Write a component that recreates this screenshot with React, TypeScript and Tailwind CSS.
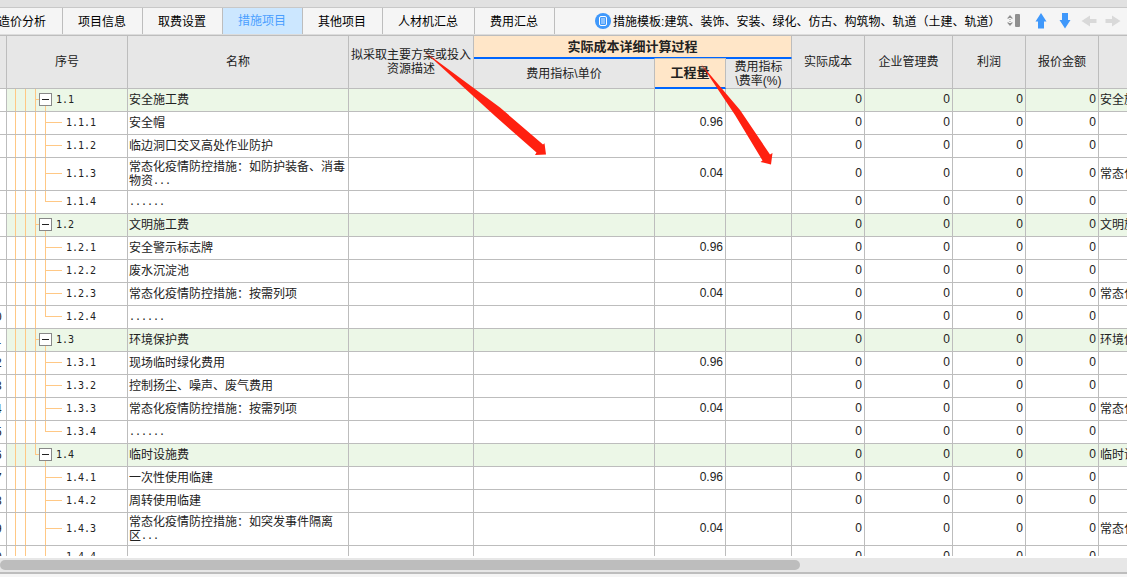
import { useState } from "react";
import clsx from "clsx";

type Row = {
  code: string;
  name: string;
  qty?: string;
  note?: string;
  group?: boolean;
  lastGroup?: boolean;
  lastChild?: boolean;
  underLast?: boolean;
  tall?: boolean;
};

const tabs = ["造价分析", "项目信息", "取费设置", "措施项目", "其他项目", "人材机汇总", "费用汇总"];

const rows: Row[] = [
  { code: "1.1", name: "安全施工费", note: "安全施工费", group: true },
  { code: "1.1.1", name: "安全帽", qty: "0.96" },
  { code: "1.1.2", name: "临边洞口交叉高处作业防护" },
  { code: "1.1.3", name: "常态化疫情防控措施：如防护装备、消毒\n物资...", qty: "0.04", note: "常态化疫情防控", tall: true },
  { code: "1.1.4", name: "......", lastChild: true },
  { code: "1.2", name: "文明施工费", note: "文明施工费", group: true },
  { code: "1.2.1", name: "安全警示标志牌", qty: "0.96" },
  { code: "1.2.2", name: "废水沉淀池" },
  { code: "1.2.3", name: "常态化疫情防控措施：按需列项", qty: "0.04", note: "常态化疫情防控" },
  { code: "1.2.4", name: "......", lastChild: true },
  { code: "1.3", name: "环境保护费", note: "环境保护费", group: true },
  { code: "1.3.1", name: "现场临时绿化费用", qty: "0.96" },
  { code: "1.3.2", name: "控制扬尘、噪声、废气费用" },
  { code: "1.3.3", name: "常态化疫情防控措施：按需列项", qty: "0.04", note: "常态化疫情防控" },
  { code: "1.3.4", name: "......", lastChild: true },
  { code: "1.4", name: "临时设施费", note: "临时设施费", group: true, lastGroup: true },
  { code: "1.4.1", name: "一次性使用临建", qty: "0.96", underLast: true },
  { code: "1.4.2", name: "周转使用临建", underLast: true },
  { code: "1.4.3", name: "常态化疫情防控措施：如突发事件隔离\n区...", qty: "0.04", note: "常态化疫情防控", tall: true, underLast: true },
  { code: "1.4.4", name: "......", lastChild: true, underLast: true },
];

const th = "border-r border-b border-[#bdbdbd] p-0 font-normal";
const td = "border-r border-b border-[#bdbdbd] p-0";

// vertical line with a branch to the right at half height
function Elbow({ last, className }: { last?: boolean; className: string }) {
  return (
    <div className={clsx("shrink-0", className)}>
      <div className="h-1/2 border-b border-l border-[#ffc885]" />
      <div className={clsx("h-1/2", !last && "border-l border-[#ffc885]")} />
    </div>
  );
}

function TreeCell({ row }: { row: Row }) {
  return (
    <div className={clsx("flex pl-2", row.tall ? "h-8" : "h-[22px]")}>
      <div className="w-[10px] border-l border-[#ffc885]" />
      <div className="w-[10px] border-l border-[#ffc885]" />
      {row.group ? (
        <>
          <Elbow last={row.lastGroup} className="w-1" />
          <div className="flex w-[13px] flex-col items-center pt-1">
            <button
              aria-label={`收起 ${row.code}`}
              className="flex size-[13px] shrink-0 items-center justify-center border border-[#888] bg-white"
            >
              <span className="h-px w-[7px] bg-[#222]" />
            </button>
            <div className="w-px flex-1 bg-[#ffc885]" />
          </div>
        </>
      ) : (
        <>
          <div className={clsx("w-[10px]", !row.underLast && "border-l border-[#ffc885]")} />
          <Elbow last={row.lastChild} className="w-[17px]" />
        </>
      )}
      <span className="ml-1 self-center pb-px font-['DejaVu_Sans_Mono',monospace] text-[10px] leading-[14px]">
        {row.code}
      </span>
    </div>
  );
}

// trailing dots keep the fixed half-width pitch of the other glyphs
function NameLine({ text }: { text: string }) {
  const dots = text.match(/\.+$/)?.[0] ?? "";
  return (
    <div className="flex h-[14px] whitespace-nowrap">
      {text.slice(0, text.length - dots.length)}
      {dots && <span className="font-['DejaVu_Sans_Mono',monospace] text-[10px]">{dots}</span>}
    </div>
  );
}

function NumCell({ children }: { children?: React.ReactNode }) {
  return <td className={clsx(td, "pr-[2px] pb-[2px] text-right")}>{children}</td>;
}

export default function App() {
  const [active, setActive] = useState("措施项目");

  return (
    <div className="relative flex h-screen flex-col overflow-hidden bg-white font-['Liberation_Sans','Noto_Sans_CJK_SC',sans-serif] text-[12px] leading-[14px] text-[#222]">
      <div className="h-2 shrink-0 border-b border-[#c8c8c8] bg-[#e1e1e1]" />

      {/* Tabs and toolbar */}
      <div className="flex h-7 shrink-0 border-b border-[#bdbdbd] bg-[#f5f5f5] text-black">
        <nav className="-ml-[17px] flex h-[27px] shrink-0 border-b border-[#dcdcdc]">
          {tabs.map((t) => (
            <button
              key={t}
              onClick={() => setActive(t)}
              className={clsx(
                "border-r border-[#bdbdbd] pr-4 pl-[15px] whitespace-nowrap",
                t === active ? "bg-[#cce7ff] text-[#4a9fff]" : "bg-[#f5f5f5] pt-[2px]"
              )}
            >
              {t}
            </button>
          ))}
        </nav>
        <div className="flex h-[27px] min-w-0 flex-1 items-center border-b border-[#dcdcdc] pr-[2px] pl-10">
          <svg className="shrink-0" width="16" height="16" viewBox="0 0 16 16" fill="none">
            <circle cx="8" cy="8" r="8" fill="#3f98fb" />
            <rect x="4.5" y="3.5" width="7" height="9" rx="1.500" stroke="#fff" />
            <path d="M6 6h4M6 8h4M6 10h4" stroke="#fff" strokeWidth="0.8" />
          </svg>
          <span className="ml-[2px] flex-1 pt-[2px] whitespace-nowrap">
            措施模板:建筑、装饰、安装、绿化、仿古、构筑物、轨道（土建、轨道）
          </span>
          <button aria-label="行高" className="shrink-0">
            <svg width="24" height="16" viewBox="0 0 24 16">
              <path d="M2 5.500 5 2l3 3.500zM2 9.500 5 13l3-3.500z" fill="#8f8f8f" />
              <path d="M4 5.500h2M4 9.500h2" stroke="#f5f5f5" />
              <path d="M5 6v4" stroke="#8f8f8f" strokeDasharray="1 1" />
              <rect x="10" y="1" width="5" height="13" rx="1" fill="#8f8f8f" />
            </svg>
          </button>
          <button aria-label="上移" className="flex w-6 shrink-0 justify-center">
            <svg width="12" height="16" viewBox="0 0 12 16">
              <path d="M6 0 11.500 8.500H9V15.500H3V8.500H.500z" fill="#3f98fb" />
            </svg>
          </button>
          <button aria-label="下移" className="flex w-6 shrink-0 justify-center">
            <svg width="12" height="16" viewBox="0 0 12 16">
              <path d="M6 15.500 11.500 7H9V0H3V7H.500z" fill="#3f98fb" />
            </svg>
          </button>
          <button aria-label="升级" className="flex w-6 shrink-0 justify-center">
            <svg width="16" height="12" viewBox="0 0 16 12">
              <path d="M.500 6 9 .500V4h6.500v4H9v3.500z" fill="#d9d9d9" />
            </svg>
          </button>
          <button aria-label="降级" className="flex w-6 shrink-0 justify-center">
            <svg width="16" height="12" viewBox="0 0 16 12">
              <path d="M15.500 6 7 .500V4H.500v4H7v3.500z" fill="#d9d9d9" />
            </svg>
          </button>
        </div>
      </div>

      {/* Grid */}
      <div className="min-h-0 flex-1 overflow-hidden border-b-2 border-white">
        <table className="-ml-[16px] w-[calc(100%+16px)] table-fixed border-separate border-spacing-0">
          <colgroup>
            <col className="w-[23px]" />
            <col className="w-[121px]" />
            <col className="w-[221px]" />
            <col className="w-[125px]" />
            <col className="w-[181px]" />
            <col className="w-[71px]" />
            <col className="w-[66px]" />
            <col className="w-[73px]" />
            <col className="w-[88px]" />
            <col className="w-[73px]" />
            <col className="w-[73px]" />
            <col />
          </colgroup>
          <thead className="bg-[#e7e7e7]">
            <tr className="h-[22px]">
              <th rowSpan={2} className={th} />
              <th rowSpan={2} className={th}>序号</th>
              <th rowSpan={2} className={th}>名称</th>
              <th rowSpan={2} className={th}>拟采取主要方案或投入<br />资源描述</th>
              <th colSpan={3} className="border-r border-b border-r-[#bdbdbd] border-b-[#0066ff] bg-[#ffe6c8] p-0 text-[13px] font-bold">
                实际成本详细计算过程
              </th>
              <th rowSpan={2} className={th}>实际成本</th>
              <th rowSpan={2} className={th}>企业管理费</th>
              <th rowSpan={2} className={th}>利润</th>
              <th rowSpan={2} className={th}>报价金额</th>
              <th rowSpan={2} className="border-b border-[#bdbdbd] p-0" />
            </tr>
            <tr className="h-[31px]">
              <th className={clsx(th, "border-t border-t-[#0066ff]")}>费用指标\单价</th>
              <th className="border-t border-r border-b-2 border-[#bdbdbd] border-b-[#0066ff] bg-[#ffe6c8] p-0 text-[13px] font-bold">
                工程量
              </th>
              <th className={clsx(th, "border-t border-t-[#0066ff]")}>费用指标<br />\费率(%)</th>
            </tr>
          </thead>
          <tbody>
            {rows.map((row, i) => (
              <tr key={row.code} className={row.group ? "bg-[#ecf7e7]" : "bg-white"}>
                <td className={clsx(td, "bg-white text-center")}>{i + 1}</td>
                <td className={td}>
                  <TreeCell row={row} />
                </td>
                <td className={clsx(td, "pl-px")}>
                  {row.name.split("\n").map((line) => (
                    <NameLine key={line} text={line} />
                  ))}
                </td>
                <td className={td} />
                <td className={td} />
                <NumCell>{row.qty}</NumCell>
                <td className={td} />
                <NumCell>0</NumCell>
                <NumCell>0</NumCell>
                <NumCell>0</NumCell>
                <NumCell>0</NumCell>
                <td className="overflow-hidden border-b border-[#bdbdbd] p-0 pl-px whitespace-nowrap">{row.note}</td>
              </tr>
            ))}
          </tbody>
        </table>
      </div>

      {/* Horizontal scrollbar */}
      <div className="h-[14px] shrink-0 bg-[#e7e7e7] py-[2px]">
        <div className="h-[10px] w-[71%] rounded-full bg-[#bdbdbd]" />
      </div>
      <div className="h-[5px] shrink-0 border-t-2 border-[#bdbdbd] bg-[#f5f5f5]" />

      {/* Red callout arrows */}
      <svg className="pointer-events-none absolute top-0 left-0" width="800" height="180" viewBox="0 0 800 180" fill="#ff2010">
        <path d="M425 52 500 107.500 543 144.500 544.500 143.300 546 154.500 535 155 536.500 152.500 495 116z" />
        <path d="M701 64 740 110 770 154.500 772.500 153 771 164.500 760.500 162 762.500 160.500 735 115z" />
      </svg>
    </div>
  );
}
